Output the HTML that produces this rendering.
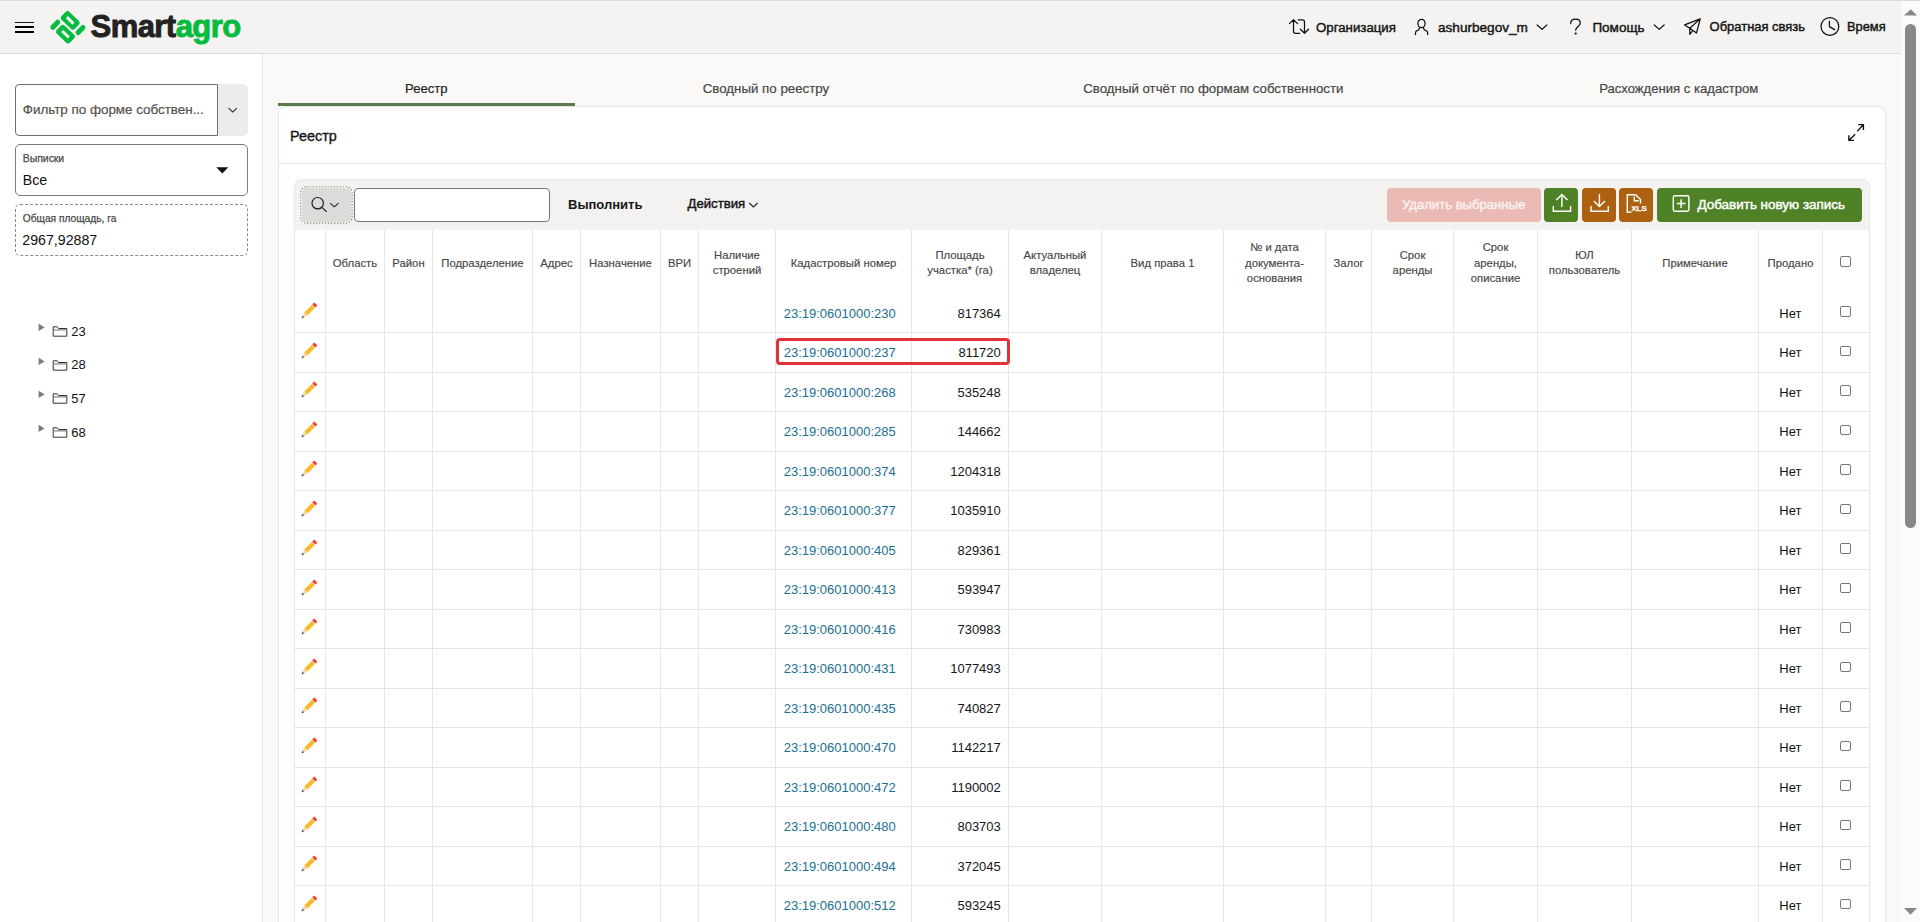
<!DOCTYPE html>
<html><head><meta charset="utf-8">
<style>
*{box-sizing:border-box;margin:0;padding:0}
html,body{width:1920px;height:922px;overflow:hidden;background:#faf9f8;font-family:"Liberation Sans",sans-serif;color:#1a1a1a;position:relative}
svg{display:block}
</style></head><body>
<div style="position:absolute;left:0px;top:0px;width:1901px;height:54px;background:#f4f3f1;border-top:1px solid #dcdcdc;border-bottom:1px solid #dddcdb"></div>
<div style="position:absolute;left:0px;top:54px;width:263px;height:868px;background:#fff;border-right:1px solid #e5e5e7"></div>
<div style="position:absolute;left:1901px;top:0px;width:19px;height:922px;background:#fbfbfb"></div>
<div style="position:absolute;left:1901px;top:0px;width:19px;height:1px;background:#dcdcdc"></div>
<div style="position:absolute;left:1905.2px;top:23.6px;width:10.8px;height:504.4px;background:#888;border-radius:6px"></div>
<svg style="position:absolute;left:1901px;top:0px;overflow:visible" width="19" height="922" viewBox="1901 0 19 922"><path d="M1904 15.6 L1917.3 15.6 L1910.65 9.2 Z" fill="#888"/><path d="M1904 908 L1917 908 L1910.5 914.7 Z" fill="#888"/></svg>
<div style="position:absolute;left:15px;top:21.9px;width:19px;height:1.15px;background:#111"></div>
<div style="position:absolute;left:15px;top:26.1px;width:19px;height:1.8px;background:#000"></div>
<div style="position:absolute;left:15px;top:31px;width:19px;height:1.8px;background:#000"></div>
<svg style="position:absolute;left:46px;top:6px;overflow:visible" width="44" height="42" viewBox="46 6 44 42"><g transform="translate(67.9 27.35) rotate(44)" fill="#06bb3e"><path fill-rule="evenodd" d="M-9.60 -12.20 H3.20 Q6.00 -12.20 6.00 -9.40 V-3.80 Q6.00 -1.00 3.20 -1.00 H-9.60 Q-12.40 -1.00 -12.40 -3.80 V-9.40 Q-12.40 -12.20 -9.60 -12.20 Z M-7.80 -8.10 H1.40 V-5.10 H-7.80 Z"/><path fill-rule="evenodd" d="M-3.40 1.00 H9.40 Q12.20 1.00 12.20 3.80 V9.40 Q12.20 12.20 9.40 12.20 H-3.40 Q-6.20 12.20 -6.20 9.40 V3.80 Q-6.20 1.00 -3.40 1.00 Z M-1.60 5.10 H7.60 V8.10 H-1.60 Z"/><rect x="-13.40" y="0.90" width="5" height="12" rx="2.5"/><rect x="8.40" y="-12.90" width="5" height="12" rx="2.5"/></g></svg>
<div style="position:absolute;left:90.5px;top:10.56px;font-size:31px;line-height:31px;font-weight:bold;color:#222;white-space:nowrap;letter-spacing:-0.55px;-webkit-text-stroke:0.9px currentColor"><span style="color:#222;-webkit-text-stroke:0.9px #222">Smart</span><span style="color:#06bb3e;-webkit-text-stroke:0.9px #06bb3e">agro</span></div>
<svg style="position:absolute;left:1285px;top:14px;overflow:visible" width="28" height="24" viewBox="1285 14 28 24"><path fill="none" stroke="#111" stroke-width="1.25" stroke-linecap="round" stroke-linejoin="round" d="M1289.4 23.6 L1293.5 19.7 L1297.6 23.6 M1293.5 20 V31.3 Q1293.5 33.3 1295.5 33.3 H1299.7 M1298.3 19.9 H1302.5 Q1304.5 19.9 1304.5 21.9 V33 M1300.4 29.2 L1304.5 33.3 L1308.6 29.2"/></svg>
<div style="position:absolute;left:1316px;top:20.98px;font-size:13.26px;line-height:13.26px;color:#161616;white-space:nowrap;-webkit-text-stroke:0.45px currentColor">Организация</div>
<svg style="position:absolute;left:1410px;top:14px;overflow:visible" width="24" height="24" viewBox="1410 14 24 24"><ellipse fill="none" stroke="#111" stroke-width="1.25" stroke-linecap="round" stroke-linejoin="round" cx="1421.5" cy="23.5" rx="3.6" ry="4.2"/><path fill="none" stroke="#111" stroke-width="1.25" stroke-linecap="round" stroke-linejoin="round" d="M1419.7 27.6 L1418.6 30 Q1415.5 31 1415.5 32.5 V34.6 M1423.3 27.6 L1424.4 30 Q1427.6 31 1427.6 32.5 V34.6"/></svg>
<div style="position:absolute;left:1438px;top:20.69px;font-size:13.6px;line-height:13.6px;color:#161616;white-space:nowrap;-webkit-text-stroke:0.45px currentColor">ashurbegov_m</div>
<svg style="position:absolute;left:1530px;top:14px;overflow:visible" width="24" height="24" viewBox="1530 14 24 24"><path fill="none" stroke="#111" stroke-width="1.25" stroke-linecap="round" stroke-linejoin="round" stroke-width="1.15" d="M1537.2 25 L1542 29.4 L1546.8 25"/></svg>
<svg style="position:absolute;left:1565px;top:14px;overflow:visible" width="24" height="24" viewBox="1565 14 24 24"><path fill="none" stroke="#111" stroke-width="1.25" stroke-linecap="round" stroke-linejoin="round" stroke-width="1.75" d="M1570.7 23.6 Q1570.7 19.2 1575.5 19.2 Q1580.3 19.2 1580.3 23 Q1580.3 25.4 1577.7 26.9 Q1575.7 28.1 1575.7 30.3"/><circle cx="1575.7" cy="33.6" r="1.15" fill="#111"/></svg>
<div style="position:absolute;left:1592.4px;top:20.77px;font-size:13.5px;line-height:13.5px;color:#161616;white-space:nowrap;-webkit-text-stroke:0.45px currentColor">Помощь</div>
<svg style="position:absolute;left:1650px;top:14px;overflow:visible" width="24" height="24" viewBox="1650 14 24 24"><path fill="none" stroke="#111" stroke-width="1.25" stroke-linecap="round" stroke-linejoin="round" stroke-width="1.15" d="M1654.3 25 L1659.2 29.4 L1664.1 25"/></svg>
<svg style="position:absolute;left:1680px;top:14px;overflow:visible" width="24" height="24" viewBox="1680 14 24 24"><path fill="none" stroke="#111" stroke-width="1.25" stroke-linecap="round" stroke-linejoin="round" d="M1700.2 18.9 L1684.6 24.9 L1689.8 28.3 L1696.5 33 Z M1689.8 28.3 L1700.2 18.9 M1689.8 28.3 V34.3 L1692.4 31.1"/></svg>
<div style="position:absolute;left:1709.6px;top:21.23px;font-size:12.96px;line-height:12.96px;color:#161616;white-space:nowrap;-webkit-text-stroke:0.45px currentColor">Обратная связь</div>
<svg style="position:absolute;left:1815px;top:12px;overflow:visible" width="30" height="30" viewBox="1815 12 30 30"><circle fill="none" stroke="#111" stroke-width="1.25" stroke-linecap="round" stroke-linejoin="round" cx="1829.9" cy="26.4" r="8.9"/><path fill="none" stroke="#111" stroke-width="1.25" stroke-linecap="round" stroke-linejoin="round" d="M1829.4 21.3 V26.6 L1834.6 29.6"/></svg>
<div style="position:absolute;left:1847px;top:21.34px;font-size:12.83px;line-height:12.83px;color:#161616;white-space:nowrap;-webkit-text-stroke:0.45px currentColor">Время</div>
<div style="position:absolute;left:217.5px;top:84px;width:30.5px;height:52px;background:#ececec;border-radius:0 5px 5px 0"></div>
<div style="position:absolute;left:15px;top:84px;width:203.2px;height:52px;border:1px solid #6f6f6f;border-radius:4px 0 0 4px;background:#fff"></div>
<svg style="position:absolute;left:225px;top:104px;overflow:visible" width="16" height="12" viewBox="225 104 16 12"><path d="M228.5 108.2 L232.7 112 L236.9 108.2" fill="none" stroke="#333" stroke-width="1.1"/></svg>
<div style="position:absolute;left:22.8px;top:103.16px;font-size:13.4px;line-height:13.4px;color:#55504a;white-space:nowrap;-webkit-text-stroke:0.2px currentColor">Фильтр по форме собствен...</div>
<div style="position:absolute;left:15px;top:144px;width:233px;height:52px;border:1px solid #7b7b7b;border-radius:5px;background:#fff"></div>
<div style="position:absolute;left:22.8px;top:154.00px;font-size:10.4px;line-height:10.4px;color:#4a4a4a;white-space:nowrap;-webkit-text-stroke:0.25px currentColor">Выписки</div>
<div style="position:absolute;left:22.8px;top:172.78px;font-size:14.2px;line-height:14.2px;color:#111;white-space:nowrap;">Все</div>
<svg style="position:absolute;left:214px;top:164px;overflow:visible" width="18" height="12" viewBox="214 164 18 12"><path d="M216.3 167.2 H228.3 L222.3 173.5 Z" fill="#111"/></svg>
<div style="position:absolute;left:15px;top:204px;width:233px;height:52px;border:1px dashed #8a8a8a;border-radius:5px;background:#fff"></div>
<div style="position:absolute;left:22.8px;top:214.37px;font-size:10.2px;line-height:10.2px;color:#4a4a4a;white-space:nowrap;-webkit-text-stroke:0.25px currentColor">Общая площадь, га</div>
<div style="position:absolute;left:22.3px;top:232.58px;font-size:14.2px;line-height:14.2px;color:#111;white-space:nowrap;">2967,92887</div>
<svg style="position:absolute;left:36px;top:322.0px;overflow:visible" width="12" height="10" viewBox="36 322.0 12 10"><path d="M38.6 323.80 L44.6 327.40 L38.6 331.00 Z" fill="#7a7a7a"/></svg>
<svg style="position:absolute;left:50px;top:324.0px;overflow:visible" width="20" height="14" viewBox="50 324.0 20 14"><path d="M53.2 336.20 V326.80 H57 L58.8 328.50 H66.8 V336.20 Z" fill="none" stroke="#333" stroke-width="1"/><path d="M53.2 329.90 H66.8" stroke="#777" stroke-width="1.1"/></svg>
<div style="position:absolute;left:71.3px;top:324.60px;font-size:13px;line-height:13px;color:#111;white-space:nowrap;">23</div>
<svg style="position:absolute;left:36px;top:355.7px;overflow:visible" width="12" height="10" viewBox="36 355.7 12 10"><path d="M38.6 357.50 L44.6 361.10 L38.6 364.70 Z" fill="#7a7a7a"/></svg>
<svg style="position:absolute;left:50px;top:357.7px;overflow:visible" width="20" height="14" viewBox="50 357.7 20 14"><path d="M53.2 369.90 V360.50 H57 L58.8 362.20 H66.8 V369.90 Z" fill="none" stroke="#333" stroke-width="1"/><path d="M53.2 363.60 H66.8" stroke="#777" stroke-width="1.1"/></svg>
<div style="position:absolute;left:71.3px;top:358.30px;font-size:13px;line-height:13px;color:#111;white-space:nowrap;">28</div>
<svg style="position:absolute;left:36px;top:389.4px;overflow:visible" width="12" height="10" viewBox="36 389.4 12 10"><path d="M38.6 391.20 L44.6 394.80 L38.6 398.40 Z" fill="#7a7a7a"/></svg>
<svg style="position:absolute;left:50px;top:391.4px;overflow:visible" width="20" height="14" viewBox="50 391.4 20 14"><path d="M53.2 403.60 V394.20 H57 L58.8 395.90 H66.8 V403.60 Z" fill="none" stroke="#333" stroke-width="1"/><path d="M53.2 397.30 H66.8" stroke="#777" stroke-width="1.1"/></svg>
<div style="position:absolute;left:71.3px;top:392.00px;font-size:13px;line-height:13px;color:#111;white-space:nowrap;">57</div>
<svg style="position:absolute;left:36px;top:423.1px;overflow:visible" width="12" height="10" viewBox="36 423.1 12 10"><path d="M38.6 424.90 L44.6 428.50 L38.6 432.10 Z" fill="#7a7a7a"/></svg>
<svg style="position:absolute;left:50px;top:425.1px;overflow:visible" width="20" height="14" viewBox="50 425.1 20 14"><path d="M53.2 437.30 V427.90 H57 L58.8 429.60 H66.8 V437.30 Z" fill="none" stroke="#333" stroke-width="1"/><path d="M53.2 431.00 H66.8" stroke="#777" stroke-width="1.1"/></svg>
<div style="position:absolute;left:71.3px;top:425.70px;font-size:13px;line-height:13px;color:#111;white-space:nowrap;">68</div>
<div style="position:absolute;left:405px;top:82.21px;font-size:13.1px;line-height:13.1px;color:#1f1f1f;white-space:nowrap;-webkit-text-stroke:0.2px currentColor">Реестр</div>
<div style="position:absolute;left:702.7px;top:82.04px;font-size:13.3px;line-height:13.3px;color:#474747;white-space:nowrap;-webkit-text-stroke:0.2px currentColor">Сводный по реестру</div>
<div style="position:absolute;left:1083.3px;top:82.08px;font-size:13.25px;line-height:13.25px;color:#474747;white-space:nowrap;-webkit-text-stroke:0.2px currentColor">Сводный отчёт по формам собственности</div>
<div style="position:absolute;left:1599.2px;top:82.21px;font-size:13.1px;line-height:13.1px;color:#474747;white-space:nowrap;-webkit-text-stroke:0.2px currentColor">Расхождения с кадастром</div>
<div style="position:absolute;left:278px;top:103px;width:297px;height:3px;background:#5b7a4b"></div>
<div style="position:absolute;left:278px;top:106px;width:1608px;height:830px;background:#fff;border:1px solid #e6e5e4;border-radius:8px"></div>
<div style="position:absolute;left:279px;top:163px;width:1606px;height:1px;background:#ebeae9"></div>
<div style="position:absolute;left:290px;top:128.81px;font-size:14.4px;line-height:14.4px;color:#161616;white-space:nowrap;-webkit-text-stroke:0.35px currentColor">Реестр</div>
<svg style="position:absolute;left:1845px;top:120px;overflow:visible" width="24" height="24" viewBox="1845 120 24 24"><path d="M1857.2 131.4 L1863.3 124.7 M1858.2 124.6 H1863.4 V129.9 M1855.2 134.3 L1849 140.3 M1848.9 135.3 V140.4 H1854" fill="none" stroke="#111" stroke-width="1.4"/></svg>
<div style="position:absolute;left:294px;top:179px;width:1576px;height:52px;background:#f3f2f1;border:1px solid #e9e8e7;border-bottom:none;border-radius:8px 8px 0 0"></div>
<svg style="position:absolute;left:298px;top:184px;overflow:visible" width="57" height="42" viewBox="298 184 57 42"><rect x="300.7" y="186.7" width="51.4" height="36.4" rx="6" fill="none" stroke="#6b8a5b" stroke-width="1.1" stroke-dasharray="1.2 1.8"/></svg>
<div style="position:absolute;left:302px;top:188px;width:49px;height:34px;background:#dddbd9;border-radius:5px"></div>
<svg style="position:absolute;left:305px;top:192px;overflow:visible" width="40" height="24" viewBox="305 192 40 24"><circle cx="317.7" cy="203.2" r="5.7" fill="none" stroke="#222" stroke-width="1.2"/><path d="M321.8 207.4 L326.6 211.7" stroke="#222" stroke-width="1.2"/><path d="M330.1 203.2 L334.3 206.8 L338.5 203.2" fill="none" stroke="#222" stroke-width="1.1"/></svg>
<div style="position:absolute;left:354px;top:188px;width:196px;height:34px;background:#fff;border:1px solid #777;border-radius:4px"></div>
<div style="position:absolute;left:568px;top:197.60px;font-size:13px;line-height:13px;font-weight:bold;color:#161616;white-space:nowrap;">Выполнить</div>
<div style="position:absolute;left:687.5px;top:197.45px;font-size:13.17px;line-height:13.17px;color:#161616;white-space:nowrap;-webkit-text-stroke:0.45px currentColor">Действия</div>
<svg style="position:absolute;left:745px;top:198px;overflow:visible" width="16" height="12" viewBox="745 198 16 12"><path d="M749.2 203 L753.4 206.9 L757.6 203" fill="none" stroke="#222" stroke-width="1.1"/></svg>
<div style="position:absolute;left:1387px;top:188px;width:154px;height:34px;background:#ebbab4;border-radius:4px"></div>
<div style="position:absolute;left:1402px;top:198.11px;font-size:13.1px;line-height:13.1px;color:#f9f1ef;white-space:nowrap;-webkit-text-stroke:0.45px currentColor">Удалить выбранные</div>
<div style="position:absolute;left:1544px;top:188px;width:34px;height:34px;background:#4f8226;border-radius:4px"></div>
<div style="position:absolute;left:1582px;top:188px;width:34px;height:34px;background:#ad600f;border-radius:4px"></div>
<div style="position:absolute;left:1619px;top:188px;width:34px;height:34px;background:#ad600f;border-radius:4px"></div>
<div style="position:absolute;left:1657px;top:188px;width:205px;height:34px;background:#4f8226;border-radius:4px"></div>
<svg style="position:absolute;left:1548px;top:190px;overflow:visible" width="28" height="28" viewBox="1548 190 28 28"><path fill="none" stroke="#fff" stroke-width="1.45" d="M1553.3 206 V211.3 H1570.6 V206 M1561.9 194.6 V207 M1556.3 199.9 L1561.9 194.5 L1567.5 199.9"/></svg>
<svg style="position:absolute;left:1586px;top:190px;overflow:visible" width="28" height="28" viewBox="1586 190 28 28"><path fill="none" stroke="#fff" stroke-width="1.45" d="M1591 206 V211.3 H1608.3 V206 M1599.4 194 V206 M1593.8 201.1 L1599.4 206.6 L1605 201.1"/></svg>
<svg style="position:absolute;left:1622px;top:190px;overflow:visible" width="28" height="28" viewBox="1622 190 28 28"><path fill="none" stroke="#fff" stroke-width="1.45" d="M1631.3 212.3 H1627.3 V194.7 H1635.6 L1640.5 199.6 V203.4 M1634.3 196.6 V200.8 H1638.7"/><text x="1631.2" y="210.7" font-family="Liberation Sans" font-weight="bold" font-size="8.1" fill="#fff" stroke="#fff" stroke-width="0.25">XLS</text></svg>
<svg style="position:absolute;left:1668px;top:192px;overflow:visible" width="26" height="24" viewBox="1668 192 26 24"><rect fill="none" stroke="#fff" stroke-width="1.45" x="1673.3" y="195.8" width="15.6" height="15.4" rx="1.6"/><path fill="none" stroke="#fff" stroke-width="1.45" stroke-width="1.8" d="M1681.1 199.2 V207.9 M1676.8 203.5 H1685.4"/></svg>
<div style="position:absolute;left:1697.5px;top:197.91px;font-size:13.45px;line-height:13.45px;color:#fff;white-space:nowrap;-webkit-text-stroke:0.45px currentColor">Добавить новую запись</div>
<div style="position:absolute;left:294px;top:230px;width:1576px;height:692px;background:#fff"></div>
<div style="position:absolute;left:294px;top:230px;width:1px;height:692px;background:#e6e6e6"></div>
<div style="position:absolute;left:325px;top:230px;width:1px;height:692px;background:#e6e6e6"></div>
<div style="position:absolute;left:384px;top:230px;width:1px;height:692px;background:#e6e6e6"></div>
<div style="position:absolute;left:432px;top:230px;width:1px;height:692px;background:#e6e6e6"></div>
<div style="position:absolute;left:532px;top:230px;width:1px;height:692px;background:#e6e6e6"></div>
<div style="position:absolute;left:580px;top:230px;width:1px;height:692px;background:#e6e6e6"></div>
<div style="position:absolute;left:660px;top:230px;width:1px;height:692px;background:#e6e6e6"></div>
<div style="position:absolute;left:698px;top:230px;width:1px;height:692px;background:#e6e6e6"></div>
<div style="position:absolute;left:775px;top:230px;width:1px;height:692px;background:#e6e6e6"></div>
<div style="position:absolute;left:911px;top:230px;width:1px;height:692px;background:#e6e6e6"></div>
<div style="position:absolute;left:1008px;top:230px;width:1px;height:692px;background:#e6e6e6"></div>
<div style="position:absolute;left:1101px;top:230px;width:1px;height:692px;background:#e6e6e6"></div>
<div style="position:absolute;left:1223px;top:230px;width:1px;height:692px;background:#e6e6e6"></div>
<div style="position:absolute;left:1325px;top:230px;width:1px;height:692px;background:#e6e6e6"></div>
<div style="position:absolute;left:1371px;top:230px;width:1px;height:692px;background:#e6e6e6"></div>
<div style="position:absolute;left:1453px;top:230px;width:1px;height:692px;background:#e6e6e6"></div>
<div style="position:absolute;left:1537px;top:230px;width:1px;height:692px;background:#e6e6e6"></div>
<div style="position:absolute;left:1631px;top:230px;width:1px;height:692px;background:#e6e6e6"></div>
<div style="position:absolute;left:1758px;top:230px;width:1px;height:692px;background:#e6e6e6"></div>
<div style="position:absolute;left:1822px;top:230px;width:1px;height:692px;background:#e6e6e6"></div>
<div style="position:absolute;left:1869px;top:230px;width:1px;height:692px;background:#e6e6e6"></div>
<div style="position:absolute;left:294px;top:332px;width:1576px;height:1px;background:#e6e6e6"></div>
<div style="position:absolute;left:294px;top:372px;width:1576px;height:1px;background:#e6e6e6"></div>
<div style="position:absolute;left:294px;top:411px;width:1576px;height:1px;background:#e6e6e6"></div>
<div style="position:absolute;left:294px;top:451px;width:1576px;height:1px;background:#e6e6e6"></div>
<div style="position:absolute;left:294px;top:490px;width:1576px;height:1px;background:#e6e6e6"></div>
<div style="position:absolute;left:294px;top:530px;width:1576px;height:1px;background:#e6e6e6"></div>
<div style="position:absolute;left:294px;top:569px;width:1576px;height:1px;background:#e6e6e6"></div>
<div style="position:absolute;left:294px;top:609px;width:1576px;height:1px;background:#e6e6e6"></div>
<div style="position:absolute;left:294px;top:648px;width:1576px;height:1px;background:#e6e6e6"></div>
<div style="position:absolute;left:294px;top:688px;width:1576px;height:1px;background:#e6e6e6"></div>
<div style="position:absolute;left:294px;top:727px;width:1576px;height:1px;background:#e6e6e6"></div>
<div style="position:absolute;left:294px;top:767px;width:1576px;height:1px;background:#e6e6e6"></div>
<div style="position:absolute;left:294px;top:806px;width:1576px;height:1px;background:#e6e6e6"></div>
<div style="position:absolute;left:294px;top:846px;width:1576px;height:1px;background:#e6e6e6"></div>
<div style="position:absolute;left:294px;top:885px;width:1576px;height:1px;background:#e6e6e6"></div>
<div style="position:absolute;left:294px;top:925px;width:1576px;height:1px;background:#e6e6e6"></div>
<div style="position:absolute;left:205.0px;width:300px;text-align:center;top:257.73px;font-size:11.3px;line-height:11.3px;color:#474747;white-space:nowrap;-webkit-text-stroke:0.15px currentColor">Область</div>
<div style="position:absolute;left:258.5px;width:300px;text-align:center;top:257.73px;font-size:11.3px;line-height:11.3px;color:#474747;white-space:nowrap;-webkit-text-stroke:0.15px currentColor">Район</div>
<div style="position:absolute;left:332.5px;width:300px;text-align:center;top:257.73px;font-size:11.3px;line-height:11.3px;color:#474747;white-space:nowrap;-webkit-text-stroke:0.15px currentColor">Подразделение</div>
<div style="position:absolute;left:406.5px;width:300px;text-align:center;top:257.73px;font-size:11.3px;line-height:11.3px;color:#474747;white-space:nowrap;-webkit-text-stroke:0.15px currentColor">Адрес</div>
<div style="position:absolute;left:470.5px;width:300px;text-align:center;top:257.73px;font-size:11.3px;line-height:11.3px;color:#474747;white-space:nowrap;-webkit-text-stroke:0.15px currentColor">Назначение</div>
<div style="position:absolute;left:529.5px;width:300px;text-align:center;top:257.73px;font-size:11.3px;line-height:11.3px;color:#474747;white-space:nowrap;-webkit-text-stroke:0.15px currentColor">ВРИ</div>
<div style="position:absolute;left:587.0px;width:300px;text-align:center;top:249.73px;font-size:11.3px;line-height:11.3px;color:#474747;white-space:nowrap;-webkit-text-stroke:0.15px currentColor">Наличие</div>
<div style="position:absolute;left:587.0px;width:300px;text-align:center;top:264.73px;font-size:11.3px;line-height:11.3px;color:#474747;white-space:nowrap;-webkit-text-stroke:0.15px currentColor">строений</div>
<div style="position:absolute;left:693.5px;width:300px;text-align:center;top:257.73px;font-size:11.3px;line-height:11.3px;color:#474747;white-space:nowrap;-webkit-text-stroke:0.15px currentColor">Кадастровый номер</div>
<div style="position:absolute;left:810.0px;width:300px;text-align:center;top:249.73px;font-size:11.3px;line-height:11.3px;color:#474747;white-space:nowrap;-webkit-text-stroke:0.15px currentColor">Площадь</div>
<div style="position:absolute;left:810.0px;width:300px;text-align:center;top:264.73px;font-size:11.3px;line-height:11.3px;color:#474747;white-space:nowrap;-webkit-text-stroke:0.15px currentColor">участка* (га)</div>
<div style="position:absolute;left:905.0px;width:300px;text-align:center;top:249.73px;font-size:11.3px;line-height:11.3px;color:#474747;white-space:nowrap;-webkit-text-stroke:0.15px currentColor">Актуальный</div>
<div style="position:absolute;left:905.0px;width:300px;text-align:center;top:264.73px;font-size:11.3px;line-height:11.3px;color:#474747;white-space:nowrap;-webkit-text-stroke:0.15px currentColor">владелец</div>
<div style="position:absolute;left:1012.5px;width:300px;text-align:center;top:257.73px;font-size:11.3px;line-height:11.3px;color:#474747;white-space:nowrap;-webkit-text-stroke:0.15px currentColor">Вид права 1</div>
<div style="position:absolute;left:1124.5px;width:300px;text-align:center;top:242.43px;font-size:11.3px;line-height:11.3px;color:#474747;white-space:nowrap;-webkit-text-stroke:0.15px currentColor">№ и дата</div>
<div style="position:absolute;left:1124.5px;width:300px;text-align:center;top:257.63px;font-size:11.3px;line-height:11.3px;color:#474747;white-space:nowrap;-webkit-text-stroke:0.15px currentColor">документа-</div>
<div style="position:absolute;left:1124.5px;width:300px;text-align:center;top:272.63px;font-size:11.3px;line-height:11.3px;color:#474747;white-space:nowrap;-webkit-text-stroke:0.15px currentColor">основания</div>
<div style="position:absolute;left:1198.5px;width:300px;text-align:center;top:257.73px;font-size:11.3px;line-height:11.3px;color:#474747;white-space:nowrap;-webkit-text-stroke:0.15px currentColor">Залог</div>
<div style="position:absolute;left:1262.5px;width:300px;text-align:center;top:249.73px;font-size:11.3px;line-height:11.3px;color:#474747;white-space:nowrap;-webkit-text-stroke:0.15px currentColor">Срок</div>
<div style="position:absolute;left:1262.5px;width:300px;text-align:center;top:264.73px;font-size:11.3px;line-height:11.3px;color:#474747;white-space:nowrap;-webkit-text-stroke:0.15px currentColor">аренды</div>
<div style="position:absolute;left:1345.5px;width:300px;text-align:center;top:242.43px;font-size:11.3px;line-height:11.3px;color:#474747;white-space:nowrap;-webkit-text-stroke:0.15px currentColor">Срок</div>
<div style="position:absolute;left:1345.5px;width:300px;text-align:center;top:257.63px;font-size:11.3px;line-height:11.3px;color:#474747;white-space:nowrap;-webkit-text-stroke:0.15px currentColor">аренды,</div>
<div style="position:absolute;left:1345.5px;width:300px;text-align:center;top:272.63px;font-size:11.3px;line-height:11.3px;color:#474747;white-space:nowrap;-webkit-text-stroke:0.15px currentColor">описание</div>
<div style="position:absolute;left:1434.5px;width:300px;text-align:center;top:249.73px;font-size:11.3px;line-height:11.3px;color:#474747;white-space:nowrap;-webkit-text-stroke:0.15px currentColor">ЮЛ</div>
<div style="position:absolute;left:1434.5px;width:300px;text-align:center;top:264.73px;font-size:11.3px;line-height:11.3px;color:#474747;white-space:nowrap;-webkit-text-stroke:0.15px currentColor">пользователь</div>
<div style="position:absolute;left:1545.0px;width:300px;text-align:center;top:257.73px;font-size:11.3px;line-height:11.3px;color:#474747;white-space:nowrap;-webkit-text-stroke:0.15px currentColor">Примечание</div>
<div style="position:absolute;left:1640.5px;width:300px;text-align:center;top:257.73px;font-size:11.3px;line-height:11.3px;color:#474747;white-space:nowrap;-webkit-text-stroke:0.15px currentColor">Продано</div>
<div style="position:absolute;left:1840.3px;top:256px;width:10.6px;height:10.5px;border:1px solid #767676;border-radius:2px;background:#fff"></div>
<svg style="position:absolute;left:300px;top:294.00px;overflow:visible" width="19" height="19" viewBox="0 0 19 19"><g transform="translate(0.0 7.0)"><g transform="rotate(-45 9.3 9.5)"><path d="M-1.9 9.5 L1.1 8.3 L1.1 10.7 Z" fill="#34506a"/><path d="M1.1 8.3 L4.6 7.4 V11.6 L1.1 10.7 Z" fill="#f7d99c"/><rect x="4.6" y="7.4" width="10.4" height="4.2" fill="#fbb928"/><rect x="15" y="7.4" width="0.5" height="4.2" fill="#f6e3c0"/><rect x="15.5" y="7.2" width="3.1" height="4.6" rx="0.9" fill="#ef4a36"/></g></g></svg>
<div style="position:absolute;left:783.7px;top:307.30px;font-size:13px;line-height:13px;color:#1b7091;white-space:nowrap;">23:19:0601000:230</div>
<div style="position:absolute;right:919.2px;text-align:right;top:307.30px;font-size:13px;line-height:13px;color:#161616;white-space:nowrap;">817364</div>
<div style="position:absolute;left:1779.3px;top:307.00px;font-size:13px;line-height:13px;color:#111;white-space:nowrap;">Нет</div>
<div style="position:absolute;left:1840.3px;top:306.1px;width:10.6px;height:10.5px;border:1px solid #767676;border-radius:2px;background:#fff"></div>
<svg style="position:absolute;left:300px;top:333.50px;overflow:visible" width="19" height="19" viewBox="0 0 19 19"><g transform="translate(0.0 7.0)"><g transform="rotate(-45 9.3 9.5)"><path d="M-1.9 9.5 L1.1 8.3 L1.1 10.7 Z" fill="#34506a"/><path d="M1.1 8.3 L4.6 7.4 V11.6 L1.1 10.7 Z" fill="#f7d99c"/><rect x="4.6" y="7.4" width="10.4" height="4.2" fill="#fbb928"/><rect x="15" y="7.4" width="0.5" height="4.2" fill="#f6e3c0"/><rect x="15.5" y="7.2" width="3.1" height="4.6" rx="0.9" fill="#ef4a36"/></g></g></svg>
<div style="position:absolute;left:783.7px;top:346.30px;font-size:13px;line-height:13px;color:#1b7091;white-space:nowrap;">23:19:0601000:237</div>
<div style="position:absolute;right:919.2px;text-align:right;top:346.30px;font-size:13px;line-height:13px;color:#161616;white-space:nowrap;">811720</div>
<div style="position:absolute;left:1779.3px;top:346.00px;font-size:13px;line-height:13px;color:#111;white-space:nowrap;">Нет</div>
<div style="position:absolute;left:1840.3px;top:345.6px;width:10.6px;height:10.5px;border:1px solid #767676;border-radius:2px;background:#fff"></div>
<svg style="position:absolute;left:300px;top:373.00px;overflow:visible" width="19" height="19" viewBox="0 0 19 19"><g transform="translate(0.0 7.0)"><g transform="rotate(-45 9.3 9.5)"><path d="M-1.9 9.5 L1.1 8.3 L1.1 10.7 Z" fill="#34506a"/><path d="M1.1 8.3 L4.6 7.4 V11.6 L1.1 10.7 Z" fill="#f7d99c"/><rect x="4.6" y="7.4" width="10.4" height="4.2" fill="#fbb928"/><rect x="15" y="7.4" width="0.5" height="4.2" fill="#f6e3c0"/><rect x="15.5" y="7.2" width="3.1" height="4.6" rx="0.9" fill="#ef4a36"/></g></g></svg>
<div style="position:absolute;left:783.7px;top:386.30px;font-size:13px;line-height:13px;color:#1b7091;white-space:nowrap;">23:19:0601000:268</div>
<div style="position:absolute;right:919.2px;text-align:right;top:386.30px;font-size:13px;line-height:13px;color:#161616;white-space:nowrap;">535248</div>
<div style="position:absolute;left:1779.3px;top:386.00px;font-size:13px;line-height:13px;color:#111;white-space:nowrap;">Нет</div>
<div style="position:absolute;left:1840.3px;top:385.1px;width:10.6px;height:10.5px;border:1px solid #767676;border-radius:2px;background:#fff"></div>
<svg style="position:absolute;left:300px;top:412.50px;overflow:visible" width="19" height="19" viewBox="0 0 19 19"><g transform="translate(0.0 7.0)"><g transform="rotate(-45 9.3 9.5)"><path d="M-1.9 9.5 L1.1 8.3 L1.1 10.7 Z" fill="#34506a"/><path d="M1.1 8.3 L4.6 7.4 V11.6 L1.1 10.7 Z" fill="#f7d99c"/><rect x="4.6" y="7.4" width="10.4" height="4.2" fill="#fbb928"/><rect x="15" y="7.4" width="0.5" height="4.2" fill="#f6e3c0"/><rect x="15.5" y="7.2" width="3.1" height="4.6" rx="0.9" fill="#ef4a36"/></g></g></svg>
<div style="position:absolute;left:783.7px;top:425.30px;font-size:13px;line-height:13px;color:#1b7091;white-space:nowrap;">23:19:0601000:285</div>
<div style="position:absolute;right:919.2px;text-align:right;top:425.30px;font-size:13px;line-height:13px;color:#161616;white-space:nowrap;">144662</div>
<div style="position:absolute;left:1779.3px;top:425.00px;font-size:13px;line-height:13px;color:#111;white-space:nowrap;">Нет</div>
<div style="position:absolute;left:1840.3px;top:424.6px;width:10.6px;height:10.5px;border:1px solid #767676;border-radius:2px;background:#fff"></div>
<svg style="position:absolute;left:300px;top:452.00px;overflow:visible" width="19" height="19" viewBox="0 0 19 19"><g transform="translate(0.0 7.0)"><g transform="rotate(-45 9.3 9.5)"><path d="M-1.9 9.5 L1.1 8.3 L1.1 10.7 Z" fill="#34506a"/><path d="M1.1 8.3 L4.6 7.4 V11.6 L1.1 10.7 Z" fill="#f7d99c"/><rect x="4.6" y="7.4" width="10.4" height="4.2" fill="#fbb928"/><rect x="15" y="7.4" width="0.5" height="4.2" fill="#f6e3c0"/><rect x="15.5" y="7.2" width="3.1" height="4.6" rx="0.9" fill="#ef4a36"/></g></g></svg>
<div style="position:absolute;left:783.7px;top:465.30px;font-size:13px;line-height:13px;color:#1b7091;white-space:nowrap;">23:19:0601000:374</div>
<div style="position:absolute;right:919.2px;text-align:right;top:465.30px;font-size:13px;line-height:13px;color:#161616;white-space:nowrap;">1204318</div>
<div style="position:absolute;left:1779.3px;top:465.00px;font-size:13px;line-height:13px;color:#111;white-space:nowrap;">Нет</div>
<div style="position:absolute;left:1840.3px;top:464.1px;width:10.6px;height:10.5px;border:1px solid #767676;border-radius:2px;background:#fff"></div>
<svg style="position:absolute;left:300px;top:491.50px;overflow:visible" width="19" height="19" viewBox="0 0 19 19"><g transform="translate(0.0 7.0)"><g transform="rotate(-45 9.3 9.5)"><path d="M-1.9 9.5 L1.1 8.3 L1.1 10.7 Z" fill="#34506a"/><path d="M1.1 8.3 L4.6 7.4 V11.6 L1.1 10.7 Z" fill="#f7d99c"/><rect x="4.6" y="7.4" width="10.4" height="4.2" fill="#fbb928"/><rect x="15" y="7.4" width="0.5" height="4.2" fill="#f6e3c0"/><rect x="15.5" y="7.2" width="3.1" height="4.6" rx="0.9" fill="#ef4a36"/></g></g></svg>
<div style="position:absolute;left:783.7px;top:504.30px;font-size:13px;line-height:13px;color:#1b7091;white-space:nowrap;">23:19:0601000:377</div>
<div style="position:absolute;right:919.2px;text-align:right;top:504.30px;font-size:13px;line-height:13px;color:#161616;white-space:nowrap;">1035910</div>
<div style="position:absolute;left:1779.3px;top:504.00px;font-size:13px;line-height:13px;color:#111;white-space:nowrap;">Нет</div>
<div style="position:absolute;left:1840.3px;top:503.6px;width:10.6px;height:10.5px;border:1px solid #767676;border-radius:2px;background:#fff"></div>
<svg style="position:absolute;left:300px;top:531.00px;overflow:visible" width="19" height="19" viewBox="0 0 19 19"><g transform="translate(0.0 7.0)"><g transform="rotate(-45 9.3 9.5)"><path d="M-1.9 9.5 L1.1 8.3 L1.1 10.7 Z" fill="#34506a"/><path d="M1.1 8.3 L4.6 7.4 V11.6 L1.1 10.7 Z" fill="#f7d99c"/><rect x="4.6" y="7.4" width="10.4" height="4.2" fill="#fbb928"/><rect x="15" y="7.4" width="0.5" height="4.2" fill="#f6e3c0"/><rect x="15.5" y="7.2" width="3.1" height="4.6" rx="0.9" fill="#ef4a36"/></g></g></svg>
<div style="position:absolute;left:783.7px;top:544.30px;font-size:13px;line-height:13px;color:#1b7091;white-space:nowrap;">23:19:0601000:405</div>
<div style="position:absolute;right:919.2px;text-align:right;top:544.30px;font-size:13px;line-height:13px;color:#161616;white-space:nowrap;">829361</div>
<div style="position:absolute;left:1779.3px;top:544.00px;font-size:13px;line-height:13px;color:#111;white-space:nowrap;">Нет</div>
<div style="position:absolute;left:1840.3px;top:543.1px;width:10.6px;height:10.5px;border:1px solid #767676;border-radius:2px;background:#fff"></div>
<svg style="position:absolute;left:300px;top:570.50px;overflow:visible" width="19" height="19" viewBox="0 0 19 19"><g transform="translate(0.0 7.0)"><g transform="rotate(-45 9.3 9.5)"><path d="M-1.9 9.5 L1.1 8.3 L1.1 10.7 Z" fill="#34506a"/><path d="M1.1 8.3 L4.6 7.4 V11.6 L1.1 10.7 Z" fill="#f7d99c"/><rect x="4.6" y="7.4" width="10.4" height="4.2" fill="#fbb928"/><rect x="15" y="7.4" width="0.5" height="4.2" fill="#f6e3c0"/><rect x="15.5" y="7.2" width="3.1" height="4.6" rx="0.9" fill="#ef4a36"/></g></g></svg>
<div style="position:absolute;left:783.7px;top:583.30px;font-size:13px;line-height:13px;color:#1b7091;white-space:nowrap;">23:19:0601000:413</div>
<div style="position:absolute;right:919.2px;text-align:right;top:583.30px;font-size:13px;line-height:13px;color:#161616;white-space:nowrap;">593947</div>
<div style="position:absolute;left:1779.3px;top:583.00px;font-size:13px;line-height:13px;color:#111;white-space:nowrap;">Нет</div>
<div style="position:absolute;left:1840.3px;top:582.6px;width:10.6px;height:10.5px;border:1px solid #767676;border-radius:2px;background:#fff"></div>
<svg style="position:absolute;left:300px;top:610.00px;overflow:visible" width="19" height="19" viewBox="0 0 19 19"><g transform="translate(0.0 7.0)"><g transform="rotate(-45 9.3 9.5)"><path d="M-1.9 9.5 L1.1 8.3 L1.1 10.7 Z" fill="#34506a"/><path d="M1.1 8.3 L4.6 7.4 V11.6 L1.1 10.7 Z" fill="#f7d99c"/><rect x="4.6" y="7.4" width="10.4" height="4.2" fill="#fbb928"/><rect x="15" y="7.4" width="0.5" height="4.2" fill="#f6e3c0"/><rect x="15.5" y="7.2" width="3.1" height="4.6" rx="0.9" fill="#ef4a36"/></g></g></svg>
<div style="position:absolute;left:783.7px;top:623.30px;font-size:13px;line-height:13px;color:#1b7091;white-space:nowrap;">23:19:0601000:416</div>
<div style="position:absolute;right:919.2px;text-align:right;top:623.30px;font-size:13px;line-height:13px;color:#161616;white-space:nowrap;">730983</div>
<div style="position:absolute;left:1779.3px;top:623.00px;font-size:13px;line-height:13px;color:#111;white-space:nowrap;">Нет</div>
<div style="position:absolute;left:1840.3px;top:622.1px;width:10.6px;height:10.5px;border:1px solid #767676;border-radius:2px;background:#fff"></div>
<svg style="position:absolute;left:300px;top:649.50px;overflow:visible" width="19" height="19" viewBox="0 0 19 19"><g transform="translate(0.0 7.0)"><g transform="rotate(-45 9.3 9.5)"><path d="M-1.9 9.5 L1.1 8.3 L1.1 10.7 Z" fill="#34506a"/><path d="M1.1 8.3 L4.6 7.4 V11.6 L1.1 10.7 Z" fill="#f7d99c"/><rect x="4.6" y="7.4" width="10.4" height="4.2" fill="#fbb928"/><rect x="15" y="7.4" width="0.5" height="4.2" fill="#f6e3c0"/><rect x="15.5" y="7.2" width="3.1" height="4.6" rx="0.9" fill="#ef4a36"/></g></g></svg>
<div style="position:absolute;left:783.7px;top:662.30px;font-size:13px;line-height:13px;color:#1b7091;white-space:nowrap;">23:19:0601000:431</div>
<div style="position:absolute;right:919.2px;text-align:right;top:662.30px;font-size:13px;line-height:13px;color:#161616;white-space:nowrap;">1077493</div>
<div style="position:absolute;left:1779.3px;top:662.00px;font-size:13px;line-height:13px;color:#111;white-space:nowrap;">Нет</div>
<div style="position:absolute;left:1840.3px;top:661.6px;width:10.6px;height:10.5px;border:1px solid #767676;border-radius:2px;background:#fff"></div>
<svg style="position:absolute;left:300px;top:689.00px;overflow:visible" width="19" height="19" viewBox="0 0 19 19"><g transform="translate(0.0 7.0)"><g transform="rotate(-45 9.3 9.5)"><path d="M-1.9 9.5 L1.1 8.3 L1.1 10.7 Z" fill="#34506a"/><path d="M1.1 8.3 L4.6 7.4 V11.6 L1.1 10.7 Z" fill="#f7d99c"/><rect x="4.6" y="7.4" width="10.4" height="4.2" fill="#fbb928"/><rect x="15" y="7.4" width="0.5" height="4.2" fill="#f6e3c0"/><rect x="15.5" y="7.2" width="3.1" height="4.6" rx="0.9" fill="#ef4a36"/></g></g></svg>
<div style="position:absolute;left:783.7px;top:702.30px;font-size:13px;line-height:13px;color:#1b7091;white-space:nowrap;">23:19:0601000:435</div>
<div style="position:absolute;right:919.2px;text-align:right;top:702.30px;font-size:13px;line-height:13px;color:#161616;white-space:nowrap;">740827</div>
<div style="position:absolute;left:1779.3px;top:702.00px;font-size:13px;line-height:13px;color:#111;white-space:nowrap;">Нет</div>
<div style="position:absolute;left:1840.3px;top:701.1px;width:10.6px;height:10.5px;border:1px solid #767676;border-radius:2px;background:#fff"></div>
<svg style="position:absolute;left:300px;top:728.50px;overflow:visible" width="19" height="19" viewBox="0 0 19 19"><g transform="translate(0.0 7.0)"><g transform="rotate(-45 9.3 9.5)"><path d="M-1.9 9.5 L1.1 8.3 L1.1 10.7 Z" fill="#34506a"/><path d="M1.1 8.3 L4.6 7.4 V11.6 L1.1 10.7 Z" fill="#f7d99c"/><rect x="4.6" y="7.4" width="10.4" height="4.2" fill="#fbb928"/><rect x="15" y="7.4" width="0.5" height="4.2" fill="#f6e3c0"/><rect x="15.5" y="7.2" width="3.1" height="4.6" rx="0.9" fill="#ef4a36"/></g></g></svg>
<div style="position:absolute;left:783.7px;top:741.30px;font-size:13px;line-height:13px;color:#1b7091;white-space:nowrap;">23:19:0601000:470</div>
<div style="position:absolute;right:919.2px;text-align:right;top:741.30px;font-size:13px;line-height:13px;color:#161616;white-space:nowrap;">1142217</div>
<div style="position:absolute;left:1779.3px;top:741.00px;font-size:13px;line-height:13px;color:#111;white-space:nowrap;">Нет</div>
<div style="position:absolute;left:1840.3px;top:740.6px;width:10.6px;height:10.5px;border:1px solid #767676;border-radius:2px;background:#fff"></div>
<svg style="position:absolute;left:300px;top:768.00px;overflow:visible" width="19" height="19" viewBox="0 0 19 19"><g transform="translate(0.0 7.0)"><g transform="rotate(-45 9.3 9.5)"><path d="M-1.9 9.5 L1.1 8.3 L1.1 10.7 Z" fill="#34506a"/><path d="M1.1 8.3 L4.6 7.4 V11.6 L1.1 10.7 Z" fill="#f7d99c"/><rect x="4.6" y="7.4" width="10.4" height="4.2" fill="#fbb928"/><rect x="15" y="7.4" width="0.5" height="4.2" fill="#f6e3c0"/><rect x="15.5" y="7.2" width="3.1" height="4.6" rx="0.9" fill="#ef4a36"/></g></g></svg>
<div style="position:absolute;left:783.7px;top:781.30px;font-size:13px;line-height:13px;color:#1b7091;white-space:nowrap;">23:19:0601000:472</div>
<div style="position:absolute;right:919.2px;text-align:right;top:781.30px;font-size:13px;line-height:13px;color:#161616;white-space:nowrap;">1190002</div>
<div style="position:absolute;left:1779.3px;top:781.00px;font-size:13px;line-height:13px;color:#111;white-space:nowrap;">Нет</div>
<div style="position:absolute;left:1840.3px;top:780.1px;width:10.6px;height:10.5px;border:1px solid #767676;border-radius:2px;background:#fff"></div>
<svg style="position:absolute;left:300px;top:807.50px;overflow:visible" width="19" height="19" viewBox="0 0 19 19"><g transform="translate(0.0 7.0)"><g transform="rotate(-45 9.3 9.5)"><path d="M-1.9 9.5 L1.1 8.3 L1.1 10.7 Z" fill="#34506a"/><path d="M1.1 8.3 L4.6 7.4 V11.6 L1.1 10.7 Z" fill="#f7d99c"/><rect x="4.6" y="7.4" width="10.4" height="4.2" fill="#fbb928"/><rect x="15" y="7.4" width="0.5" height="4.2" fill="#f6e3c0"/><rect x="15.5" y="7.2" width="3.1" height="4.6" rx="0.9" fill="#ef4a36"/></g></g></svg>
<div style="position:absolute;left:783.7px;top:820.30px;font-size:13px;line-height:13px;color:#1b7091;white-space:nowrap;">23:19:0601000:480</div>
<div style="position:absolute;right:919.2px;text-align:right;top:820.30px;font-size:13px;line-height:13px;color:#161616;white-space:nowrap;">803703</div>
<div style="position:absolute;left:1779.3px;top:820.00px;font-size:13px;line-height:13px;color:#111;white-space:nowrap;">Нет</div>
<div style="position:absolute;left:1840.3px;top:819.6px;width:10.6px;height:10.5px;border:1px solid #767676;border-radius:2px;background:#fff"></div>
<svg style="position:absolute;left:300px;top:847.00px;overflow:visible" width="19" height="19" viewBox="0 0 19 19"><g transform="translate(0.0 7.0)"><g transform="rotate(-45 9.3 9.5)"><path d="M-1.9 9.5 L1.1 8.3 L1.1 10.7 Z" fill="#34506a"/><path d="M1.1 8.3 L4.6 7.4 V11.6 L1.1 10.7 Z" fill="#f7d99c"/><rect x="4.6" y="7.4" width="10.4" height="4.2" fill="#fbb928"/><rect x="15" y="7.4" width="0.5" height="4.2" fill="#f6e3c0"/><rect x="15.5" y="7.2" width="3.1" height="4.6" rx="0.9" fill="#ef4a36"/></g></g></svg>
<div style="position:absolute;left:783.7px;top:860.30px;font-size:13px;line-height:13px;color:#1b7091;white-space:nowrap;">23:19:0601000:494</div>
<div style="position:absolute;right:919.2px;text-align:right;top:860.30px;font-size:13px;line-height:13px;color:#161616;white-space:nowrap;">372045</div>
<div style="position:absolute;left:1779.3px;top:860.00px;font-size:13px;line-height:13px;color:#111;white-space:nowrap;">Нет</div>
<div style="position:absolute;left:1840.3px;top:859.1px;width:10.6px;height:10.5px;border:1px solid #767676;border-radius:2px;background:#fff"></div>
<svg style="position:absolute;left:300px;top:886.50px;overflow:visible" width="19" height="19" viewBox="0 0 19 19"><g transform="translate(0.0 7.0)"><g transform="rotate(-45 9.3 9.5)"><path d="M-1.9 9.5 L1.1 8.3 L1.1 10.7 Z" fill="#34506a"/><path d="M1.1 8.3 L4.6 7.4 V11.6 L1.1 10.7 Z" fill="#f7d99c"/><rect x="4.6" y="7.4" width="10.4" height="4.2" fill="#fbb928"/><rect x="15" y="7.4" width="0.5" height="4.2" fill="#f6e3c0"/><rect x="15.5" y="7.2" width="3.1" height="4.6" rx="0.9" fill="#ef4a36"/></g></g></svg>
<div style="position:absolute;left:783.7px;top:899.30px;font-size:13px;line-height:13px;color:#1b7091;white-space:nowrap;">23:19:0601000:512</div>
<div style="position:absolute;right:919.2px;text-align:right;top:899.30px;font-size:13px;line-height:13px;color:#161616;white-space:nowrap;">593245</div>
<div style="position:absolute;left:1779.3px;top:899.00px;font-size:13px;line-height:13px;color:#111;white-space:nowrap;">Нет</div>
<div style="position:absolute;left:1840.3px;top:898.6px;width:10.6px;height:10.5px;border:1px solid #767676;border-radius:2px;background:#fff"></div>
<div style="position:absolute;left:775.5px;top:338.3px;width:234px;height:26.9px;border:3px solid #e0323b;border-radius:4px"></div>
</body></html>
